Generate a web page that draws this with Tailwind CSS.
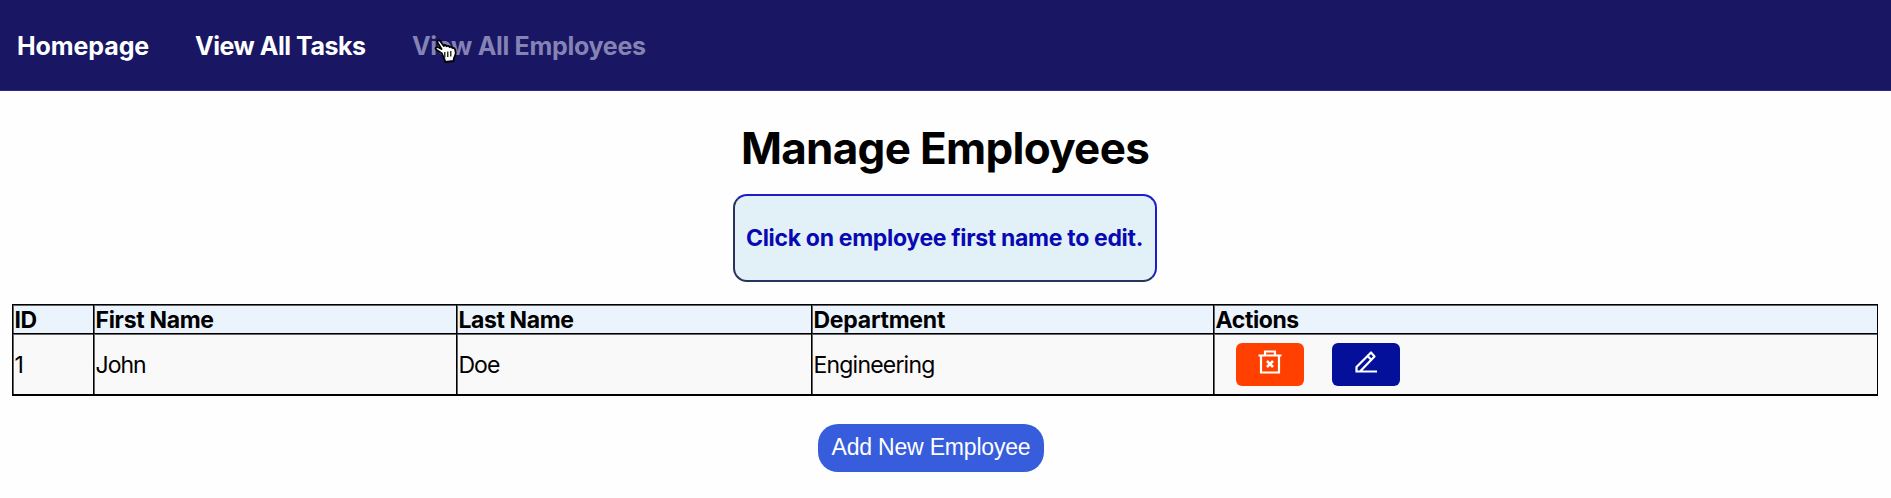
<!DOCTYPE html>
<html lang="en">
<head>
<meta charset="utf-8">
<title>Manage Employees</title>
<script src="https://cdn.jsdelivr.net/npm/@tailwindcss/browser@4"></script>
</head>
<body class="h-[498px] overflow-hidden bg-[#fefefe] font-['Inter',sans-serif] text-black">
<nav class="relative flex h-[91px] items-center border-b border-[#2a239c] bg-[#191664] pt-px pl-[17px] text-[25px] leading-[30px] font-bold whitespace-nowrap text-white">
  <a class="w-[178px] tracking-[-0.1px]">Homepage</a>
  <a class="w-[217px] tracking-[-0.47px]">View All Tasks</a>
  <a class="tracking-[-0.3px] text-[#8583b4]">View All Employees</a>
  <svg class="absolute top-[38px] left-[434px]" width="25" height="26" viewBox="0 0 25 26"><path d="M8 15.500L2 11.500c-1.200-1.800.8-3 2.500-2l3 1.500L3.500 4.500c-.8-2 1.600-3 2.800-1.300L9.800 8c.7-1 2.200-.8 2.900.2 1-.7 2.300-.3 2.900.8 1-.5 2.300 0 2.700 1 1.400-.4 2.400.4 2.900 1.700l.5 3c.2 2-1.200 3.500-1.700 5.300l-.5 3-8.300 1c-.5-3-1.700-4.500-3.200-8.500z" fill="#fff" stroke="#000" stroke-width="1.800" stroke-linejoin="round"/><path d="M10.800 14v5.500M13.800 13.500v5.500M16.800 13v5.500" stroke="#000" stroke-width="1.200"/></svg>
</nav>
<main class="flex flex-col items-center">
  <h1 class="mt-[31px] mr-[1px] text-[44px] leading-[52px] font-bold tracking-[-0.7px] whitespace-nowrap">Manage Employees</h1>
  <div class="mt-[20px] mr-[2px] flex h-[88px] w-[424px] items-center justify-center rounded-[14px] border-2 border-[#1d1dcc] border-b-[#28345c] border-l-[#28345c] bg-[#e2f1f7] text-[23px] font-bold tracking-[-0.32px] whitespace-nowrap text-[#0808b4]">Click on employee first name to edit.</div>
  <div class="mt-[22px] ml-[12px] grid w-[1866px] grid-cols-[81px_363px_355px_402px_664px] grid-rows-[29px_61px] self-start border-t border-b border-l border-black text-[23px] whitespace-nowrap *:flex *:items-center *:border-r *:border-b *:border-black *:pt-[2px] *:pl-[1.5px] *:shadow-[inset_1px_1px_0_#00000099]">
    <div class="bg-[#ebf4fd] font-bold tracking-[-0.4px]">ID</div>
    <div class="bg-[#ebf4fd] font-bold tracking-[-0.32px]">First Name</div>
    <div class="bg-[#ebf4fd] font-bold tracking-[-0.4px]">Last Name</div>
    <div class="bg-[#ebf4fd] font-bold tracking-[-0.25px]">Department</div>
    <div class="bg-[#ebf4fd] font-bold tracking-[-0.4px]">Actions</div>
    <div class="bg-[#f9f9f9]">1</div>
    <div class="bg-[#f9f9f9] tracking-[-1px]">John</div>
    <div class="bg-[#f9f9f9] tracking-[-1px]">Doe</div>
    <div class="bg-[#f9f9f9] tracking-[-0.8px]">Engineering</div>
    <div class="gap-[28px] bg-[#f9f9f9]">
      <button class="mb-px ml-[20px] flex h-[43px] w-[68px] justify-center rounded-[6px] bg-[#ff4000] pt-[6px]"><svg width="26" height="26" viewBox="0 0 26 26" fill="none" stroke="#fff" stroke-width="2.200"><path d="M1.500 6.500h23M4 6.500v17h18v-17M8 6.500v-4h10v4"/><path d="M10 12l6 6M16 12l-6 6" stroke-width="2.600"/></svg></button>
      <button class="mb-px flex h-[43px] w-[68px] justify-center rounded-[6px] bg-[#05109a] pt-[6px]"><svg width="26" height="26" viewBox="0 0 26 26" fill="none" stroke="#fff" stroke-width="2.200" stroke-linejoin="round"><path d="M3.500 22.500v-4.500L18 3.500l3.500 4L7 22.500zM2.500 22.500h21.500M14.500 7l3.800 3.800"/></svg></button>
    </div>
  </div>
  <button class="mt-[28px] mr-[29px] h-[48px] w-[226px] rounded-[20px] bg-[#375ddd] pb-[2px] text-[23px] tracking-[-0.2px] whitespace-nowrap text-white font-['Liberation_Sans',sans-serif]">Add New Employee</button>
</main>
</body>
</html>
